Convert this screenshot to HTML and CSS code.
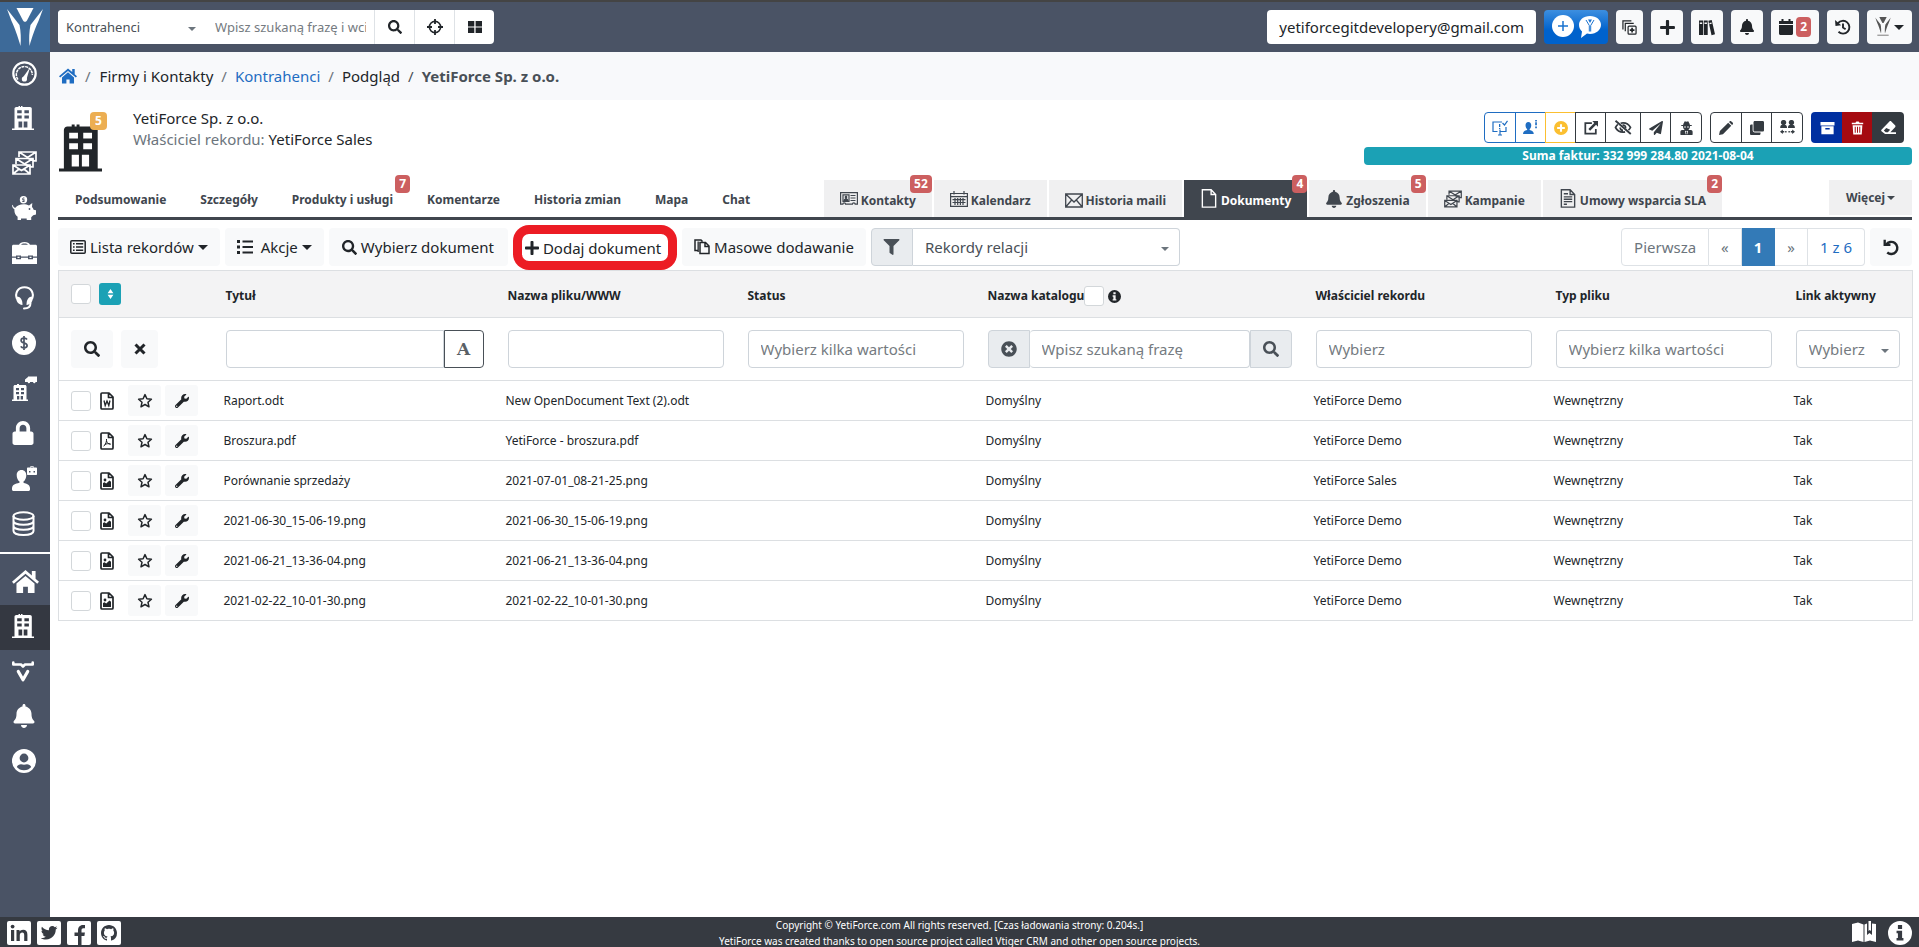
FILE: index.html
```html
<!DOCTYPE html>
<html lang="pl">
<head>
<meta charset="utf-8">
<meta name="viewport" content="width=device-width, initial-scale=1">
<title>YetiForce Sp. z o.o.</title>
<link rel="stylesheet" href="styles.css">
</head>
<body>
<svg class="sprite" aria-hidden="true">
  <symbol id="search" viewBox="0 0 512 512"><path d="M505 442.7L405.3 343c-4.5-4.5-10.6-7-17-7H372c27.6-35.3 44-79.7 44-128C416 93.1 322.9 0 208 0S0 93.1 0 208s93.1 208 208 208c48.3 0 92.7-16.4 128-44v16.3c0 6.4 2.5 12.5 7 17l99.7 99.7c9.4 9.4 24.6 9.4 33.9 0l28.3-28.3c9.4-9.4 9.4-24.6.1-34zM208 336c-70.7 0-128-57.2-128-128 0-70.7 57.2-128 128-128 70.7 0 128 57.2 128 128 0 70.7-57.2 128-128 128z"/></symbol>
  <symbol id="target" viewBox="0 0 16 16"><circle cx="8" cy="8" r="5.6" fill="none" stroke="currentColor" stroke-width="1.6"/><path d="M7.1 0h1.8v5H7.1zM7.1 11h1.8v5H7.1zM0 7.1h5v1.8H0zM11 7.1h5v1.8h-5z"/></symbol>
  <symbol id="grid" viewBox="0 0 14 12"><path d="M0 0h6.3v5.4H0zM7.6 0H14v5.4H7.6zM0 6.6h6.3V12H0zM7.6 6.6H14V12H7.6z"/></symbol>
  <symbol id="bell" viewBox="0 0 448 512"><path d="M224 512c35.32 0 63.97-28.65 63.97-64H160.03c0 35.35 28.65 64 63.97 64zm215.39-149.71c-19.32-20.76-55.47-51.99-55.47-154.29 0-77.7-54.48-139.9-127.94-155.16V32c0-17.67-14.32-32-31.98-32s-31.98 14.33-31.98 32v20.84C118.56 68.1 64.08 130.3 64.08 208c0 102.3-36.15 133.53-55.47 154.29-6 6.45-8.66 14.16-8.61 21.71.11 16.4 12.98 32 32.1 32h383.8c19.12 0 32-15.6 32.1-32 .05-7.55-2.61-15.27-8.61-21.71z"/></symbol>
  <symbol id="plus" viewBox="0 0 448 512"><path d="M416 208H272V64c0-17.67-14.33-32-32-32h-32c-17.67 0-32 14.33-32 32v144H32c-17.67 0-32 14.33-32 32v32c0 17.67 14.33 32 32 32h144v144c0 17.67 14.33 32 32 32h32c17.67 0 32-14.33 32-32V304h144c17.67 0 32-14.33 32-32v-32c0-17.67-14.33-32-32-32z"/></symbol>
  <symbol id="wrench" viewBox="0 0 512 512"><path d="M507.73 109.1c-2.24-9.03-13.54-12.09-20.12-5.51l-74.36 74.36-67.88-11.31-11.31-67.88 74.36-74.36c6.62-6.62 3.43-17.9-5.66-20.16-47.38-11.74-99.55.91-136.58 37.93-39.64 39.64-50.55 97.1-34.05 147.2L18.74 402.76c-24.99 24.99-24.99 65.51 0 90.5 24.99 24.99 65.51 24.99 90.5 0l213.21-213.21c50.12 16.71 107.47 5.68 147.37-34.22 37.07-37.07 49.7-89.32 37.91-136.73zM64 472c-13.25 0-24-10.75-24-24 0-13.26 10.75-24 24-24s24 10.74 24 24c0 13.25-10.75 24-24 24z"/></symbol>
  <symbol id="star" viewBox="0 0 16 16"><path d="M8 1.6l1.9 4.2 4.5.5-3.4 3 1 4.5L8 11.5l-4 2.3 1-4.5-3.4-3 4.5-.5z" fill="none" stroke="currentColor" stroke-width="1.5" stroke-linejoin="round"/></symbol>
  <symbol id="filter" viewBox="0 0 512 512"><path d="M487.976 0H24.028C2.71 0-8.047 25.866 7.058 40.971L192 225.941V432c0 7.831 3.821 15.17 10.237 19.662l80 55.98C298.02 518.69 320 507.493 320 487.98V225.941l184.947-184.97C520.021 25.896 509.338 0 487.976 0z"/></symbol>
  <symbol id="lock" viewBox="0 0 448 512"><path d="M400 224h-24v-72C376 68.2 307.8 0 224 0S72 68.2 72 152v72H48c-26.5 0-48 21.5-48 48v192c0 26.5 21.5 48 48 48h352c26.5 0 48-21.5 48-48V272c0-26.500-21.500-48-48-48zm-104 0H152v-72c0-39.700 32.300-72 72-72s72 32.300 72 72v72z"/></symbol>
  <symbol id="xcircle" viewBox="0 0 512 512"><path d="M256 8C119 8 8 119 8 256s111 248 248 248 248-111 248-248S393 8 256 8zm121.6 313.1c4.7 4.7 4.7 12.3 0 17L338 377.6c-4.7 4.7-12.3 4.7-17 0L256 312l-65.1 65.6c-4.7 4.7-12.3 4.7-17 0L134.4 338c-4.7-4.7-4.7-12.3 0-17l65.6-65-65.6-65.1c-4.7-4.7-4.7-12.3 0-17l39.6-39.6c4.7-4.7 12.3-4.7 17 0l65 65.7 65.1-65.6c4.7-4.7 12.3-4.7 17 0l39.6 39.6c4.7 4.7 4.7 12.3 0 17L312 256l65.6 65.1z"/></symbol>
  <symbol id="info" viewBox="0 0 16 16"><path fill-rule="evenodd" d="M8 0a8 8 0 1 0 0 16A8 8 0 0 0 8 0zM6.600 2.700h2.800v2.600H6.600zM5.700 6.500h3.700v4.800h.9v1.700H5.700v-1.700h.9V8.200h-.9z"/></symbol>
  <symbol id="x" viewBox="0 0 14 14"><path d="M2.500 2.500l9 9M11.500 2.500l-9 9" stroke="currentColor" stroke-width="3" fill="none"/></symbol>
  <symbol id="sort" viewBox="0 0 8 12"><path d="M4 0l3.500 5h-7zM4 12L.5 7h7z"/></symbol>
  <symbol id="home" viewBox="0 0 26 22"><path d="M13 0L0 11.200l1.700 2L13 3.600l11.300 9.600 1.700-2-3.300-2.900V1h-3.600v4.200z"/><path d="M13 5.600L4.300 13v9h6.400v-6h4.600v6h6.400v-9z"/></symbol>
  <symbol id="building" viewBox="0 0 22 24"><path fill-rule="evenodd" d="M6.500 1V0H8v1h1V0h1.500v1H18c1 0 1.800.8 1.800 1.800v19.700H22V24H0v-1.500h2.500V2.800C2.500 1.800 3.300 1 4.300 1zM5.200 4.200v3h4.500v-3zm7.200 0v3h4.500v-3zm-7.200 5.400v3h4.500v-3zm7.200 0v3h4.500v-3zM6.500 15.500v6h3.700v-6zm5.200 0v6h3.700v-6z"/></symbol>
  <symbol id="gauge" viewBox="0 0 25 25"><circle cx="12.500" cy="12.500" r="11.200" fill="none" stroke="currentColor" stroke-width="2.200"/><path d="M6 18.500A8 8 0 1 1 20.300 14" fill="none" stroke="currentColor" stroke-width="1.500" stroke-dasharray="3 .7"/><path d="M10.500 17L18 6.500l-3.500 11.800z"/><circle cx="12.400" cy="18" r="2.600"/></symbol>
  <symbol id="mails" viewBox="0 0 25 24"><g fill="none" stroke="currentColor" stroke-width="1.700"><path d="M7 6V1h17v9h-3M7 1l8.500 5.500L24 1M15 7l8 3"/><path d="M4 13V7.500h17V16h-3M4 7.500l8.500 5.500L21 7.500M12 13l8 3"/><path d="M1 14h17v9H1zM1 14l8.500 5.500L18 14M1 23l6-5M18 23l-6-5"/></g></symbol>
  <symbol id="piggy" viewBox="0 0 24 24"><path fill-rule="evenodd" d="M11.500 0a3.700 3.700 0 1 0 0 7.400 3.700 3.700 0 0 0 0-7.400zm-.5 1.500h1.400v1h-1.500v.8h1.600v2.600h-2.200V5h1.200v-.8h-1.200V1.900H11z"/><path d="M1 9.500c.5 2 1.200 2.300 2.400 2.200C5 9.600 8 8.300 11.500 8.300c2 0 4 .4 5.500 1.100L20.300 7l-.3 4c.8.800 1.300 1.700 1.600 2.800l2.400.5v4.200l-2.800.8-2 2V24h-4.500v-1.500H9V24H5.600v-3.300C3.500 19.200 2.400 17 2.400 14.500v-1.300C.9 12.600 0 11 0 8.800z"/><circle cx="17.500" cy="13" r=".9" fill="#4a5365"/></symbol>
  <symbol id="brief" viewBox="0 0 25 22"><path fill-rule="evenodd" d="M7 2.800C8 1 9.500 0 12.500 0S17 1 18 2.800h5.500c.8 0 1.500.6 1.500 1.400v10.300h-4v-1h-5v1H9v-1H4v1H0V4.200c0-.8.700-1.400 1.500-1.400zm2 0h7c-.7-.9-1.700-1.300-3.500-1.300S9.700 1.900 9 2.800z"/><path d="M0 15.700h4v1.500h5v-1.500h7v1.500h5v-1.500h4V22H0zM5.500 14.700h2v1.300h-2zM17.500 14.700h2v1.300h-2z"/></symbol>
  <symbol id="headset" viewBox="0 0 20 24"><path d="M2.500 13C0 7 3.500 1.200 10 1.200S20 7 17.500 13" fill="none" stroke="currentColor" stroke-width="2"/><path d="M2 10.500c4 0 6 3 6 8.500C3.500 18.500 1 15 2 10.500zM18 10.500c-4 0-6 3-6 8.500 4.500-.5 7-4 6-8.500z"/><path d="M16 17c0 4-2 5.500-6.500 5.500" fill="none" stroke="currentColor" stroke-width="2" stroke-linecap="round"/></symbol>
  <symbol id="dollar" viewBox="0 0 24 24"><circle cx="12" cy="12" r="12"/><path d="M15 8.500c-.6-1-1.600-1.300-3-1.300-1.800 0-2.900.9-2.900 2.200 0 3.200 6 1.800 6 5.200 0 1.400-1.200 2.300-3.100 2.300-1.500 0-2.600-.5-3.200-1.600M12 5v14" fill="none" stroke="#4a5365" stroke-width="1.700"/></symbol>
  <symbol id="fleet" viewBox="0 0 25 25"><path fill-rule="evenodd" d="M3 9h2V8h2v1h6c.8 0 1.500.7 1.500 1.500V23.500H16V25H0v-1.500h1.500v-13C1.500 9.700 2.200 9 3 9zm1 3v2.300h3V12zm5 0v2.300h3V12zm-5 4v2.300h3V16zm5 0v2.300h3V16zm-4 4v3.500h2.300V20zm3.700 0v3.500H11V20z"/><path d="M13 3.500L16 1v-.5h9V6h-1.500a1.200 1.200 0 0 1-2.400 0h-3a1.200 1.200 0 0 1-2.400 0H13z"/></symbol>
  <symbol id="agent" viewBox="0 0 25 25"><path d="M9.500 4C6.500 4 4.700 6.200 4.700 9s1 5.300 2.800 6.600v1.200C3 18 .5 18.500 0 22v1.500c0 .8.700 1.500 1.500 1.500h15c.8 0 1.500-.7 1.500-1.500V22c-.5-3.500-3-4-6.500-5.200v-1.200c1.800-1.300 2.800-3.800 2.800-6.600S12.500 4 9.500 4z"/><path fill-rule="evenodd" d="M15 2.500c0-.6.400-1 1-1h2.500V0h3v1.500H24c.6 0 1 .4 1 1V8c0 .6-.4 1-1 1h-8c-.6 0-1-.4-1-1zM19 .7v.8h2V.7zM17 5h1.500v1.500H17zm4.500 0H23v1.500h-1.500z"/></symbol>
  <symbol id="db" viewBox="0 0 22 25"><ellipse cx="11" cy="5" rx="10" ry="3.800" fill="none" stroke="currentColor" stroke-width="2"/><path d="M1 5v15c0 2.500 4.500 4 10 4s10-1.500 10-4V5M1 10c0 2.300 4.500 3.800 10 3.800S21 12.300 21 10M1 15c0 2.300 4.500 3.800 10 3.800S21 17.300 21 15" fill="none" stroke="currentColor" stroke-width="2"/></symbol>
  <symbol id="bull" viewBox="0 0 22 21"><path d="M1.300 1.500v2h7.700l2 2 2-2h7.700v-2" fill="none" stroke="currentColor" stroke-width="2.600" stroke-linecap="round" stroke-linejoin="round"/><path d="M6.300 10.500l4.700 8.300 4.700-8.300" fill="none" stroke="currentColor" stroke-width="3.200" stroke-linecap="round" stroke-linejoin="round"/></symbol>
  <symbol id="usercircle" viewBox="0 0 24 24"><path fill-rule="evenodd" d="M12 0a12 12 0 1 0 0 24 12 12 0 0 0 0-24zm0 4.600a4.400 4.400 0 1 1 0 8.800 4.400 4.400 0 0 1 0-8.800zm0 16.600c-3 0-5.600-1.300-7.200-3.300.8-1.600 2.400-2.600 4.200-2.600 1 .3 2 .5 3 .5s2-.2 3-.5c1.800 0 3.400 1 4.200 2.600-1.600 2-4.200 3.300-7.200 3.300z"/></symbol>
  <symbol id="copyadd" viewBox="0 0 16 16"><g fill="none" stroke="currentColor" stroke-width="1.300"><path d="M1 10V1h9M3.500 12V3.500h9"/><rect x="6.500" y="6.500" width="8.500" height="8.500" rx="1"/><path d="M10.750 8.300v5M8.300 10.750h5" stroke-width="1.800"/></g></symbol>
  <symbol id="books" viewBox="0 0 18 18"><path fill-rule="evenodd" d="M0 1h4.500v16.500H0zM.9 3.500h2.700V5H.9zM5.300 1h4.500v16.500H5.300zM6.200 3.500h2.700V5H6.200zM10.500 1.500l3.800-1L18 16.500l-3.900 1.200zM11.600 4l2.400-.6.3 1.400-2.400.6z"/></symbol>
  <symbol id="calendar" viewBox="0 0 14 16"><path d="M2.500 0h2v2h5V0h2v2H14v3H0V2h2.500zM0 6h14v8.500c0 .8-.7 1.500-1.500 1.500h-11C.7 16 0 15.300 0 14.500z"/></symbol>
  <symbol id="history" viewBox="0 0 16 16"><path d="M3 4.200A6.400 6.400 0 1 1 3.500 12.800M8 4.500V8.500l2.600 1.700" fill="none" stroke="currentColor" stroke-width="1.900"/><path d="M0 1l.5 6 5.700-.8z"/></symbol>
  <symbol id="note" viewBox="0 0 16 16"><path d="M10 2H1v9.500h4.500M14 7v4.500H8.500M8 9.500V15M6 15h4M10.500 3l2 2L15.500.8" fill="none" stroke="currentColor" stroke-width="1.200"/><path d="M7 4h1.300v3H7zM7 8h1.300v1H7z"/></symbol>
  <symbol id="useralert" viewBox="0 0 16 16"><path d="M5.700 2C3.700 2 2.700 3.500 2.700 5.500c0 1.800.7 3.500 1.700 4.200v1C2 11.300.2 12 0 15h11.500c-.2-3-2-3.700-4.400-4.300v-1c1-.7 1.700-2.400 1.700-4.200C8.800 3.500 7.700 2 5.700 2zM13 0h1.800v1.500H13zM13 2.500h1.800v3H13zM13 7h1.800v1.800H13z"/></symbol>
  <symbol id="pluscircle" viewBox="0 0 16 16"><path fill-rule="evenodd" d="M8 0a8 8 0 1 0 0 16A8 8 0 0 0 8 0zM6.800 3.600h2.400v3.200h3.200v2.400H9.200v3.200H6.800V9.200H3.600V6.800h3.200z"/></symbol>
  <symbol id="external" viewBox="0 0 16 16"><path d="M9 2.500H1.500v12h12V9" fill="none" stroke="currentColor" stroke-width="2"/><path d="M9.500 0H16v6.500l-2.200-2.200L7 11.100 5 9l6.700-6.800z"/></symbol>
  <symbol id="eyeslash" viewBox="0 0 18 16"><path d="M3.500 4.700C2.300 5.700 1.500 7 1 8c1.500 3 4.500 5 8 5 .8 0 1.500-.1 2.200-.3M6.500 3.400C7.300 3.100 8.200 3 9 3c3.500 0 6.500 2 8 5-.4.900-1.100 1.900-2.200 2.800M8.500 5.500c2-.3 3.800 1.200 3.200 3.300M6 8c0 1.800 1.300 3 3 3" fill="none" stroke="currentColor" stroke-width="1.800"/><path d="M1 .8L17.300 15" stroke="currentColor" stroke-width="2"/></symbol>
  <symbol id="plane" viewBox="0 0 512 512"><path d="M476 3.200L12.500 270.600c-18.100 10.400-15.800 35.600 2.200 43.200L121 358.400l287.300-253.200c5.500-4.900 13.300 2.600 8.600 8.300L176 407v80.500c0 23.600 28.500 32.900 42.500 15.800L282 426l124.600 52.200c14.200 6 30.400-2.900 33-18.200l72-432C515 7.800 493.300-6.800 476 3.200z"/></symbol>
  <symbol id="spy" viewBox="0 0 14 16"><path fill-rule="evenodd" d="M3.500 3L5 .3l2 .6 2-.6L10.500 3l.4 1.500H13v1.300h-2c0 2-.7 3.300-1.500 4l-.3.600h3c1 0 1.500.8 1.800 2V15c0 .6-.4 1-1 1H1c-.6 0-1-.4-1-1v-2.600c.3-1.200.8-2 1.800-2h3l-.3-.6C3.700 9.100 3 7.800 3 5.800H1V4.500h2.100zM4.300 6.300v1.200h2V6.300zm3.400 0v1.200h2V6.300zM5.300 11l.7 4h.7l-.3-2.500.6-.7.600.7-.3 2.500H8l.7-4-1.700.6z"/></symbol>
  <symbol id="pencil" viewBox="0 0 16 16"><path d="M0 16l1-4.500L10.500 2 14 5.500 4.500 15zM11.400 1.100l.6-.6c.7-.7 1.600-.7 2.200 0l1.300 1.300c.7.700.7 1.500 0 2.200l-.6.600z"/></symbol>
  <symbol id="clone" viewBox="0 0 512 512"><path d="M464 0c26.510 0 48 21.490 48 48v288c0 26.510-21.490 48-48 48H176c-26.510 0-48-21.490-48-48V48c0-26.510 21.490-48 48-48h288M176 416c-44.112 0-80-35.888-80-80V128H48c-26.510 0-48 21.490-48 48v288c0 26.510 21.490 48 48 48h288c26.510 0 48-21.490 48-48v-48H176z"/></symbol>
  <symbol id="transfer" viewBox="0 0 16 16"><path d="M3.800 0a2.600 2.600 0 0 1 1.200 5c1.500.3 2.500 1 2.500 3.500H.2C.2 6 1 5.300 2.600 5a2.600 2.600 0 0 1 1.200-5zM12.200 0a2.600 2.600 0 0 1 1.200 5c1.500.3 2.500 1 2.500 3.500H8.500c0-2.500 1-3.200 2.500-3.500a2.600 2.600 0 0 1 1.200-5zM0 12.500L3 10v1.800h1.500v1.400H3V15zM16 12.500L13 10v1.800h-1.500v1.400H13V15zM5.500 11.800H7v1.400H5.500zM9 11.800h1.500v1.400H9z"/></symbol>
  <symbol id="archive" viewBox="0 0 16 16"><path fill-rule="evenodd" d="M0 1h16v4H0zM1 6h14v9H1zM5.500 8v1.600h5V8z"/></symbol>
  <symbol id="trash" viewBox="0 0 16 16"><path fill-rule="evenodd" d="M1 1.500h4.500L6.500 0h3l1 1.500H15v2H1zM2 4.500h12l-.8 11.500H2.800zM4.600 6.500v7.300h1.200V6.500zm2.800 0v7.300h1.200V6.500zm2.800 0v7.300h1.200V6.500z"/></symbol>
  <symbol id="eraser" viewBox="0 0 16 16"><path fill-rule="evenodd" d="M.5 10.500L9 1.500c.6-.6 1.400-.6 2 0l4 4.200c.6.600.6 1.400 0 2L10 13h6v2H4.300L.5 12c-.5-.5-.5-1 0-1.500zM5.600 8.500L3 11.300 5 13h2.300l2.500-2.500z"/></symbol>
  <symbol id="list" viewBox="0 0 16 14"><rect x=".8" y=".8" width="14.400" height="12.400" rx="1" fill="none" stroke="currentColor" stroke-width="1.500"/><path d="M3 3h1.600v1.600H3zM3 6.200h1.600v1.600H3zM3 9.400h1.600V11H3zM6 3h7.200v1.500H6zM6 6.200h7.200v1.500H6zM6 9.400h7.200v1.500H6z"/></symbol>
  <symbol id="bullets" viewBox="0 0 16 14"><path d="M0 0h3v3H0zM0 5.500h3v3H0zM0 11h3v3H0zM5.500.5H16v2H5.500zM5.500 6H16v2H5.500zM5.500 11.500H16v2H5.500z"/></symbol>
  <symbol id="papers" viewBox="0 0 16 16"><path d="M4 11.500H1V1h6l1.500 1.500M6 14.500V3.500h5.500L15 7v7.500zM11 3.800V7.500h3.800" fill="none" stroke="currentColor" stroke-width="1.500"/><path d="M3.500 13V2.500h1.300V13z"/></symbol>
  <symbol id="undo" viewBox="0 0 16 16"><path d="M3 5.300A5.700 5.700 0 1 1 4 12.700" fill="none" stroke="currentColor" stroke-width="2.300"/><path d="M.5.800h2.200v3.700H7v2.200H.5z"/></symbol>
  <symbol id="vcard" viewBox="0 0 18 14"><path fill="none" stroke="currentColor" stroke-width="1.200" d="M.6.600h16.800v11.600h-2.200a1.400 1.400 0 0 0-2.800 0H5.600a1.400 1.400 0 0 0-2.800 0H.6zM10.500 3.500h5M10.500 6h5M10.500 8.500h5M3 2.800h6v6.500H3z"/><path d="M6 3.500c1.600 0 1.600 2.500.7 3 1 .3 1.800.8 1.800 2.500h-5c0-1.700.8-2.200 1.800-2.500-.9-.5-.9-3 .7-3z"/></symbol>
  <symbol id="cal2" viewBox="0 0 18 16"><path fill="none" stroke="currentColor" stroke-width="1.200" d="M.6 2.500h16.800v12.900H.6zM.6 5.600h16.800M4 0v3.500M14 0v3.500M2.500 8.700h13M2.500 11.500h13M5 7v7M7.700 7v7M10.400 7v7M13 7v7"/></symbol>
  <symbol id="mail" viewBox="0 0 18 15"><path fill="none" stroke="currentColor" stroke-width="1.300" d="M.7 1h16.600v13H.7zM.7 1L9 9l8.300-8M.7 14l6-7M17.300 14l-6-7"/></symbol>
  <symbol id="page" viewBox="0 0 14 18"><path fill="none" stroke="currentColor" stroke-width="1.300" d="M.7.700h8.300l4.300 4.500v12H.7zM9 .7v4.500h4.300"/></symbol>
  <symbol id="contract" viewBox="0 0 14 18"><path fill="none" stroke="currentColor" stroke-width="1.300" d="M.7.700h8.300l4.300 4.500v12H.7zM9 .7v4.500h4.300M3 4.500h4M3 7.500h8M3 9.700h8M3 12h8M3 14.500h3"/></symbol>
  <symbol id="fileword" viewBox="0 0 14 18"><path fill="none" stroke="currentColor" stroke-width="1.700" stroke-linejoin="round" d="M1 2c0-.6.400-1 1-1h7l4 4v11c0 .6-.4 1-1 1H2c-.6 0-1-.4-1-1zM8.500 1v4.500H13"/><path fill="none" stroke="currentColor" stroke-width="1.300" d="M4 8.500l1.200 5L7 9l1.800 4.500 1.200-5"/></symbol>
  <symbol id="filepdf" viewBox="0 0 14 18"><path fill="none" stroke="currentColor" stroke-width="1.700" stroke-linejoin="round" d="M1 2c0-.6.400-1 1-1h7l4 4v11c0 .6-.4 1-1 1H2c-.6 0-1-.4-1-1zM8.500 1v4.500H13"/><path fill="none" stroke="currentColor" d="M6.500 7c.3 2.500-.8 5.200-2.800 7.300M6.500 9c.7 2 2 3.200 4.300 3.200M4.700 12.500c2-.9 3.500-1 5.500-.6"/></symbol>
  <symbol id="fileimg" viewBox="0 0 14 18"><path fill="none" stroke="currentColor" stroke-width="1.700" stroke-linejoin="round" d="M1 2c0-.6.400-1 1-1h7l4 4v11c0 .6-.4 1-1 1H2c-.6 0-1-.4-1-1zM8.500 1v4.500H13"/><path d="M3 11l1.500-.8 1.700 1.300L9.500 8.500 11 9.800V15H3z"/><circle cx="5" cy="8" r="1.400"/></symbol>
  <symbol id="yeti" viewBox="0 0 36 38"><path d="M9.500 0h17L20 12.500c-1 1.800-3 1.800-4 0z"/><path d="M0 1l12.500 16c1.300 6 1.700 14 1 21C11 29 7.500 19 4.500 13zM36 1L23.500 17c-1.300 6-1.700 14-1 21C25 29 28.500 19 31.500 13z"/></symbol>
  <symbol id="linkedin" viewBox="0 0 24 24"><rect width="24" height="24" rx="2"/><path fill="#363a41" d="M4 9h3.200v11H4zM9.500 9h3v1.600c.8-1.200 2-1.900 3.600-1.900 2.900 0 4.300 1.700 4.300 5V20h-3.200v-5.800c0-1.700-.5-2.700-1.900-2.700-1.600 0-2.500 1.100-2.500 2.900V20H9.500z"/><circle cx="5.600" cy="5.600" r="1.900" fill="#363a41"/></symbol>
  <symbol id="twitter" viewBox="0 0 24 24"><rect width="24" height="24" rx="2"/><path fill="#363a41" transform="translate(3.800 3.500) scale(.0325)" d="M459.370 151.716c.325 4.548.325 9.097.325 13.645 0 138.720-105.583 298.558-298.558 298.558-59.452 0-114.680-17.219-161.137-47.106 8.447.974 16.568 1.299 25.340 1.299 49.055 0 94.213-16.568 130.274-44.832-46.132-.975-84.792-31.188-98.112-72.772 6.498.974 12.995 1.624 19.818 1.624 9.421 0 18.843-1.300 27.614-3.573-48.081-9.747-84.143-51.980-84.143-102.985v-1.299c13.969 7.797 30.214 12.670 47.431 13.319-28.264-18.843-46.781-51.005-46.781-87.391 0-19.492 5.197-37.360 14.294-52.954 51.655 63.675 129.300 105.258 216.365 109.807-1.624-7.797-2.599-15.918-2.599-24.040 0-57.828 46.782-104.934 104.934-104.934 30.213 0 57.502 12.670 76.670 33.137 23.715-4.548 46.456-13.320 66.599-25.340-7.798 24.366-24.366 44.833-46.132 57.827 21.117-2.273 41.584-8.122 60.426-16.243-14.292 20.791-32.161 39.308-52.628 54.253z"/></symbol>
  <symbol id="facebook" viewBox="0 0 24 24"><rect width="24" height="24" rx="2"/><path fill="#363a41" d="M11 24v-9H7.500v-3.400H11V9.500C11 6.300 12.800 4 16 4h2v3.300h-1.600c-1.300 0-1.900.8-1.900 2v2.300h3.400l-.5 3.400h-2.900v9z"/></symbol>
  <symbol id="github" viewBox="0 0 24 24"><rect width="24" height="24" rx="2"/><path fill="#363a41" transform="translate(4 4)" d="M8 0C3.580 0 0 3.580 0 8c0 3.540 2.290 6.530 5.470 7.590.4.070.55-.170.55-.380 0-.190-.010-.820-.010-1.490-2.010.370-2.530-.490-2.690-.940-.090-.230-.480-.940-.820-1.130-.280-.150-.680-.520-.010-.530.630-.010 1.080.580 1.230.820.720 1.210 1.870.870 2.330.660.070-.520.280-.870.510-1.070-1.780-.200-3.640-.890-3.640-3.950 0-.870.310-1.590.820-2.150-.080-.200-.360-1.020.080-2.120 0 0 .670-.210 2.200.820.640-.180 1.320-.270 2-.270s1.360.090 2 .270c1.530-1.040 2.200-.820 2.200-.820.440 1.100.160 1.920.080 2.120.510.560.820 1.270.820 2.150 0 3.070-1.870 3.750-3.650 3.950.290.250.540.730.540 1.480 0 1.070-.010 1.930-.010 2.200 0 .210.150.460.55.380A8.010 8.010 0 0 0 16 8c0-4.420-3.580-8-8-8z"/></symbol>
  <symbol id="manual" viewBox="0 0 24 22"><path d="M0 3l6-1.500 5.500 2V21L6 19.500 0 21z"/><path d="M12.500 3.500L15 2.600V14l2.500-2 2.500 2V2.500l4 .5v18l-6-1.500-5.500 1.500z"/><path d="M16.500 0h2.500v10l-1.300-1-1.200 1z"/></symbol>
</svg>

<div class="app">
  <header class="topbar">
    <a class="brand" href="#" aria-label="YetiForce"><svg width="36" height="38"><use href="#yeti"/></svg></a>
    <form class="search">
      <div class="pick search-pick"><select aria-label="Moduł"><option>Kontrahenci</option></select></div>
      <input class="search-text" type="text" aria-label="Szukaj" placeholder="Wpisz szukaną frazę i wciśnij enter">
      <button type="button" aria-label="Szukaj"><svg width="14" height="14"><use href="#search"/></svg></button>
      <button type="button" aria-label="Cel"><svg width="16" height="16"><use href="#target"/></svg></button>
      <button type="button" aria-label="Zaawansowane"><svg width="14" height="12"><use href="#grid"/></svg></button>
    </form>
    <div class="tools">
      <a class="email" href="#">yetiforcegitdevelopery@gmail.com</a>
      <button class="tool chat" type="button" aria-label="Czat"><svg width="52" height="26" viewBox="0 0 52 26"><circle cx="13" cy="12" r="11" fill="#fff"/><path d="M13 7v10M8 12h10" stroke="#1a73d0" stroke-width="1.500"/><path d="M40 2c6.500 0 11 4 11 8.800S46.500 20 40 20c-1 0-2-.1-3-.4L31 24l1-6.500c-2-1.600-3-4-3-6.700C29 6 33.500 2 40 2z" fill="#fff"/><path d="M36 6l3.300 5.500v6M44 6l-3.300 5.500v6" fill="none" stroke="#1a73d0"/><path d="M38 5.500h4L40 9z" fill="#1a73d0"/></svg></button>
      <button class="tool slim" type="button" aria-label="Kopiuj"><svg width="15" height="15"><use href="#copyadd"/></svg></button>
      <button class="tool" type="button" aria-label="Dodaj"><svg width="15" height="17"><use href="#plus"/></svg></button>
      <button class="tool" type="button" aria-label="Biblioteka"><svg width="16" height="17"><use href="#books"/></svg></button>
      <button class="tool" type="button" aria-label="Powiadomienia"><svg width="14" height="16"><use href="#bell"/></svg></button>
      <button class="tool" type="button" aria-label="Kalendarz"><svg width="14" height="16"><use href="#calendar"/></svg><span class="badge">2</span></button>
      <button class="tool" type="button" aria-label="Historia"><svg width="16" height="16"><use href="#history"/></svg></button>
      <button class="tool" type="button" aria-label="Konto"><svg class="avatar" width="16" height="20" viewBox="0 0 36 46"><use href="#yeti" width="36" height="38"/><path d="M5 42h26" stroke="#999" stroke-width="3"/></svg><i class="caret"></i></button>
    </div>
  </header>

  <div class="body">
    <nav class="side" aria-label="Menu">
      <a href="#" aria-label="Pulpit"><svg width="25" height="25"><use href="#gauge"/></svg></a>
      <a href="#" aria-label="Firmy"><svg width="22" height="24"><use href="#building"/></svg></a>
      <a href="#" aria-label="Marketing"><svg width="25" height="24"><use href="#mails"/></svg></a>
      <a href="#" aria-label="Sprzedaż"><svg width="24" height="24"><use href="#piggy"/></svg></a>
      <a href="#" aria-label="Realizacja"><svg width="25" height="22"><use href="#brief"/></svg></a>
      <a href="#" aria-label="Wsparcie"><svg width="25" height="24"><use href="#headset"/></svg></a>
      <a href="#" aria-label="Księgowość"><svg width="24" height="24"><use href="#dollar"/></svg></a>
      <a href="#" aria-label="Logistyka"><svg width="25" height="25"><use href="#fleet"/></svg></a>
      <a href="#" aria-label="Sekretariat"><svg width="22" height="24"><use href="#lock"/></svg></a>
      <a href="#" aria-label="Kadry"><svg width="25" height="25"><use href="#agent"/></svg></a>
      <a href="#" aria-label="Bazy"><svg width="23" height="25"><use href="#db"/></svg></a>
      <hr>
      <a href="#" aria-label="Start"><svg width="27" height="23"><use href="#home"/></svg></a>
      <a class="on" href="#" aria-label="Kontrahenci"><svg width="22" height="24"><use href="#building"/></svg></a>
      <a href="#" aria-label="Vtiger"><svg width="22" height="21"><use href="#bull"/></svg></a>
      <a href="#" aria-label="Powiadomienia"><svg width="24" height="24"><use href="#bell"/></svg></a>
      <a href="#" aria-label="Użytkownik"><svg width="24" height="24"><use href="#usercircle"/></svg></a>
    </nav>

    <main class="main">
      <nav class="crumbs" aria-label="Ścieżka">
        <a href="#" aria-label="Start"><svg width="18" height="16"><use href="#home"/></svg></a><i>/</i>
        <span>Firmy i Kontakty</span><i>/</i><a href="#">Kontrahenci</a><i>/</i><span>Podgląd</span><i class="b">/</i><b>YetiForce Sp. z o.o.</b>
      </nav>

      <div class="content">
        <section class="record">
          <div class="record-icon"><svg width="43" height="48"><use href="#building"/></svg><span class="badge amber">5</span></div>
          <div class="record-text"><h1>YetiForce Sp. z o.o.</h1><p>Właściciel rekordu: <a href="#">YetiForce Sales</a></p></div>
          <div class="record-side">
            <div class="actions">
              <div class="group">
                <button class="blue" type="button" aria-label="Notatka"><svg width="16" height="16"><use href="#note"/></svg></button>
                <button class="blue" type="button" aria-label="Osoba"><svg width="15" height="15"><use href="#useralert"/></svg></button>
                <button class="yellow" type="button" aria-label="Dodaj"><svg width="14" height="14"><use href="#pluscircle"/></svg></button>
                <button type="button" aria-label="Otwórz"><svg width="14" height="14"><use href="#external"/></svg></button>
                <button class="wide" type="button" aria-label="Ukryj"><svg width="18" height="15"><use href="#eyeslash"/></svg></button>
                <button type="button" aria-label="Wyślij"><svg width="14" height="14"><use href="#plane"/></svg></button>
                <button type="button" aria-label="Prywatność"><svg width="13" height="14"><use href="#spy"/></svg></button>
              </div>
              <div class="group">
                <button type="button" aria-label="Edytuj"><svg width="14" height="14"><use href="#pencil"/></svg></button>
                <button type="button" aria-label="Duplikuj"><svg width="14" height="14"><use href="#clone"/></svg></button>
                <button type="button" aria-label="Przenieś"><svg width="15" height="15"><use href="#transfer"/></svg></button>
              </div>
              <div class="group solid">
                <button class="navy" type="button" aria-label="Archiwizuj"><svg width="15" height="14"><use href="#archive"/></svg></button>
                <button class="red" type="button" aria-label="Usuń"><svg width="13" height="14"><use href="#trash"/></svg></button>
                <button class="dark" type="button" aria-label="Wyczyść"><svg width="15" height="15"><use href="#eraser"/></svg></button>
              </div>
            </div>
            <div class="total">Suma faktur: 332 999 284.80 2021-08-04</div>
          </div>
        </section>

        <nav class="tabs" aria-label="Zakładki">
          <a href="#">Podsumowanie</a><a href="#">Szczegóły</a><a href="#">Produkty i usługi<span class="badge">7</span></a><a href="#">Komentarze</a><a href="#">Historia zmian</a><a href="#">Mapa</a><a href="#">Chat</a>
          <div class="related">
            <a href="#"><svg class="tall" width="18" height="14"><use href="#vcard"/></svg>Kontakty<span class="badge">52</span></a>
            <a href="#"><svg class="tall" width="18" height="16"><use href="#cal2"/></svg>Kalendarz</a>
            <a href="#"><svg width="18" height="15"><use href="#mail"/></svg>Historia maili</a>
            <a class="on" href="#"><svg class="tall" width="18" height="19"><use href="#page"/></svg>Dokumenty<span class="badge">4</span></a>
            <a href="#"><svg class="tall" width="18" height="18"><use href="#bell"/></svg>Zgłoszenia<span class="badge">5</span></a>
            <a href="#"><svg class="tall" width="18" height="18"><use href="#mails"/></svg>Kampanie</a>
            <a href="#"><svg class="tall" width="18" height="19"><use href="#contract"/></svg>Umowy wsparcia SLA<span class="badge">2</span></a>
          </div>
          <button class="more" type="button">Więcej<i class="caret"></i></button>
        </nav>

        <div class="toolbar">
          <button class="btn" type="button"><svg width="16" height="14"><use href="#list"/></svg>Lista rekordów<i class="caret"></i></button>
          <button class="btn" type="button"><svg width="16" height="14"><use href="#bullets"/></svg>&nbsp;Akcje<i class="caret"></i></button>
          <button class="btn" type="button"><svg width="15" height="15"><use href="#search"/></svg>Wybierz dokument</button>
          <button class="btn marked" type="button"><svg width="14" height="16"><use href="#plus"/></svg>Dodaj dokument</button>
          <button class="btn" type="button"><svg width="16" height="16"><use href="#papers"/></svg>Masowe dodawanie</button>
          <div class="combo relation"><span class="addon"><svg width="17" height="16"><use href="#filter"/></svg></span><div class="pick"><select aria-label="Filtr"><option>Rekordy relacji</option></select></div></div>
          <div class="pager">
            <button type="button">Pierwsza</button><button type="button">«</button><button class="on" type="button">1</button><button type="button">»</button><button class="link" type="button">1 z 6</button>
          </div>
          <button class="btn icon" type="button" aria-label="Odśwież"><svg width="17" height="17"><use href="#undo"/></svg></button>
        </div>

        <table class="grid">
          <colgroup><col class="c-tools"><col class="c-title"><col class="c-std"><col class="c-std"><col class="c-folder"><col class="c-std"><col class="c-std"><col class="c-link"></colgroup>
          <thead>
            <tr class="head">
              <th><div class="cell"><input type="checkbox" aria-label="Zaznacz wszystko"><button class="sort" type="button" aria-label="Sortuj"><svg width="7" height="10"><use href="#sort"/></svg></button></div></th>
              <th>Tytuł</th><th>Nazwa pliku/WWW</th><th>Status</th>
              <th><div class="cell tight"><label for="sub">Nazwa katalogu</label><input id="sub" type="checkbox"><svg width="13" height="13"><use href="#info"/></svg></div></th>
              <th>Właściciel rekordu</th><th>Typ pliku</th><th>Link aktywny</th>
            </tr>
            <tr class="filters">
              <td><div class="cell"><button class="btn icon" type="button" aria-label="Szukaj"><svg width="16" height="16"><use href="#search"/></svg></button><button class="btn clear" type="button" aria-label="Wyczyść"><svg width="14" height="14"><use href="#x"/></svg></button></div></td>
              <td><div class="combo"><input type="text" aria-label="Tytuł"><button class="case" type="button">A</button></div></td>
              <td><input class="field" type="text" aria-label="Nazwa pliku"></td>
              <td><input class="field" type="text" aria-label="Status" placeholder="Wybierz kilka wartości"></td>
              <td><div class="combo"><button class="addon" type="button" aria-label="Wyczyść"><svg width="16" height="16"><use href="#xcircle"/></svg></button><input type="text" aria-label="Nazwa katalogu" placeholder="Wpisz szukaną frazę"><button class="addon" type="button" aria-label="Szukaj"><svg width="16" height="16"><use href="#search"/></svg></button></div></td>
              <td><input class="field" type="text" aria-label="Właściciel rekordu" placeholder="Wybierz"></td>
              <td><input class="field" type="text" aria-label="Typ pliku" placeholder="Wybierz kilka wartości"></td>
              <td><div class="pick boxed"><select aria-label="Link aktywny"><option>Wybierz</option></select></div></td>
            </tr>
          </thead>
          <tbody>
            <tr><td><div class="cell"><input type="checkbox" aria-label="Raport.odt"><svg width="14" height="18"><use href="#fileword"/></svg><button class="mini" type="button" aria-label="Ulubione"><svg width="16" height="16"><use href="#star"/></svg></button><button class="mini" type="button" aria-label="Narzędzia"><svg width="14" height="14"><use href="#wrench"/></svg></button></div></td><td>Raport.odt</td><td>New OpenDocument Text (2).odt</td><td></td><td>Domyślny</td><td>YetiForce Demo</td><td>Wewnętrzny</td><td>Tak</td></tr>
            <tr><td><div class="cell"><input type="checkbox" aria-label="Broszura.pdf"><svg width="14" height="18"><use href="#filepdf"/></svg><button class="mini" type="button" aria-label="Ulubione"><svg width="16" height="16"><use href="#star"/></svg></button><button class="mini" type="button" aria-label="Narzędzia"><svg width="14" height="14"><use href="#wrench"/></svg></button></div></td><td>Broszura.pdf</td><td>YetiForce - broszura.pdf</td><td></td><td>Domyślny</td><td>YetiForce Demo</td><td>Wewnętrzny</td><td>Tak</td></tr>
            <tr><td><div class="cell"><input type="checkbox" aria-label="Porównanie sprzedaży"><svg width="14" height="18"><use href="#fileimg"/></svg><button class="mini" type="button" aria-label="Ulubione"><svg width="16" height="16"><use href="#star"/></svg></button><button class="mini" type="button" aria-label="Narzędzia"><svg width="14" height="14"><use href="#wrench"/></svg></button></div></td><td>Porównanie sprzedaży</td><td>2021-07-01_08-21-25.png</td><td></td><td>Domyślny</td><td>YetiForce Sales</td><td>Wewnętrzny</td><td>Tak</td></tr>
            <tr><td><div class="cell"><input type="checkbox" aria-label="2021-06-30_15-06-19.png"><svg width="14" height="18"><use href="#fileimg"/></svg><button class="mini" type="button" aria-label="Ulubione"><svg width="16" height="16"><use href="#star"/></svg></button><button class="mini" type="button" aria-label="Narzędzia"><svg width="14" height="14"><use href="#wrench"/></svg></button></div></td><td>2021-06-30_15-06-19.png</td><td>2021-06-30_15-06-19.png</td><td></td><td>Domyślny</td><td>YetiForce Demo</td><td>Wewnętrzny</td><td>Tak</td></tr>
            <tr><td><div class="cell"><input type="checkbox" aria-label="2021-06-21_13-36-04.png"><svg width="14" height="18"><use href="#fileimg"/></svg><button class="mini" type="button" aria-label="Ulubione"><svg width="16" height="16"><use href="#star"/></svg></button><button class="mini" type="button" aria-label="Narzędzia"><svg width="14" height="14"><use href="#wrench"/></svg></button></div></td><td>2021-06-21_13-36-04.png</td><td>2021-06-21_13-36-04.png</td><td></td><td>Domyślny</td><td>YetiForce Demo</td><td>Wewnętrzny</td><td>Tak</td></tr>
            <tr><td><div class="cell"><input type="checkbox" aria-label="2021-02-22_10-01-30.png"><svg width="14" height="18"><use href="#fileimg"/></svg><button class="mini" type="button" aria-label="Ulubione"><svg width="16" height="16"><use href="#star"/></svg></button><button class="mini" type="button" aria-label="Narzędzia"><svg width="14" height="14"><use href="#wrench"/></svg></button></div></td><td>2021-02-22_10-01-30.png</td><td>2021-02-22_10-01-30.png</td><td></td><td>Domyślny</td><td>YetiForce Demo</td><td>Wewnętrzny</td><td>Tak</td></tr>
          </tbody>
        </table>
      </div>
    </main>
  </div>

  <footer class="footer">
    <div class="social">
      <a href="#" aria-label="LinkedIn"><svg width="24" height="24"><use href="#linkedin"/></svg></a>
      <a href="#" aria-label="Twitter"><svg width="24" height="24"><use href="#twitter"/></svg></a>
      <a href="#" aria-label="Facebook"><svg width="24" height="24"><use href="#facebook"/></svg></a>
      <a href="#" aria-label="GitHub"><svg width="24" height="24"><use href="#github"/></svg></a>
    </div>
    <p>Copyright © YetiForce.com All rights reserved. [Czas ładowania strony: 0.204s.]<br>YetiForce was created thanks to open source project called Vtiger CRM and other open source projects.</p>
    <div class="help">
      <a href="#" aria-label="Dokumentacja"><svg width="24" height="22"><use href="#manual"/></svg></a>
      <a href="#" aria-label="Informacje"><svg width="24" height="24"><use href="#info"/></svg></a>
    </div>
  </footer>
</div>
</body>
</html>
```
FILE: styles.css
```css
* { box-sizing: border-box; }
body {
  margin: 0;
  font: 15px/20px "Noto Sans", "Open Sans", sans-serif;
  color: #212529;
  background: #fff;
}
a { color: inherit; text-decoration: none; }
h1, p { margin: 0; font-weight: 400; font-size: inherit; }
i { font-style: normal; }
svg { fill: currentColor; flex: none; display: block; }
button, input, select { font: inherit; color: inherit; margin: 0; }
button {
  border: 0;
  padding: 0;
  background: none;
  display: flex;
  align-items: center;
  justify-content: center;
}
.sprite { position: absolute; width: 0; height: 0; }
.app { min-height: 100vh; display: flex; flex-direction: column; }
.caret {
  border: 5px solid transparent;
  border-top-color: currentColor;
  border-bottom: 0;
}
.badge {
  background: #cc5f60;
  color: #fff;
  font-weight: 700;
  font-size: 12px;
  line-height: 18px;
  border-radius: 4px;
  padding: 0 4px;
}
.badge.amber { background: #ecae52; padding: 0 5px; }

/* form parts */
input[type="text"], select {
  appearance: none;
  border: 1px solid #ced4da;
  border-radius: 4px;
  background: #fff;
  height: 38px;
  width: 100%;
  min-width: 0;
  padding: 0 12px;
  color: #495057;
  outline: 0;
}
input::placeholder { color: #757b81; opacity: 1; }
input[type="checkbox"] {
  appearance: none;
  flex: none;
  width: 20px;
  height: 20px;
  border: 1px solid #d3d7da;
  border-radius: 3px;
  background: #fff;
}
.pick { position: relative; flex: 1; min-width: 0; }
.pick::after {
  content: "";
  position: absolute;
  right: 11px;
  top: 50%;
  border: 4px solid transparent;
  border-top-color: #6c757d;
  border-bottom: 0;
}
.boxed select { color: #757b81; }
.combo { display: flex; }
.combo > * { border-radius: 0; }
.combo > :first-child { border-radius: 4px 0 0 4px; }
.combo > :last-child, .combo > :last-child select { border-radius: 0 4px 4px 0; }
.addon {
  flex: 0 0 42px;
  height: 38px;
  display: flex;
  align-items: center;
  justify-content: center;
  background: #e9ecef;
  border: 1px solid #ced4da;
  color: #495057;
}
.combo .addon + * , .combo .addon + .pick select { border-left: 0; }

/* top bar */
.topbar {
  height: 52px;
  display: flex;
  align-items: center;
  background: #4a5365;
  border-top: 2px solid #444;
  padding-right: 7px;
}
.brand {
  width: 50px;
  align-self: stretch;
  background: #3d6a99;
  color: #fff;
  display: flex;
  align-items: center;
  justify-content: center;
}
.search { display: flex; width: 436px; height: 34px; margin-left: 8px; background: #fff; border-radius: 4px; overflow: hidden; font-size: 13px; }
.search-pick { flex: 0 0 149px; }
.search input[type="text"], .search select { height: 34px; border: 0; border-radius: 0; padding: 0 8px; }
.search .search-text { width: 167px; border-left: 1px solid #ced4da; }
.search button { flex: 1; border-left: 1px solid #dee2e6; }
.tools { display: flex; gap: 8px; margin-left: auto; }
.email, .tool {
  height: 34px;
  border-radius: 4px;
  background: #f8f9fa;
  display: flex;
  align-items: center;
  justify-content: center;
}
.email { background: #fff; padding: 0 12px; }
.tool { min-width: 32px; padding: 0 8px; gap: 3px; }
.tool.slim { min-width: 27px; padding: 0 6px; }
.tool.chat { padding: 0 6px; background: linear-gradient(#3d8fe0, #0062cc 60%); }
.tool .badge { line-height: 20px; }
.avatar { color: #555; }

/* side menu */
.body { flex: 1; display: flex; }
.side { width: 50px; flex: none; background: #4a5365; color: #fff; }
.side a { height: 45px; display: flex; align-items: center; padding: 0 0 3px 12px; }
.side hr { margin: 5px 0 6px; border: 0; border-top: 2px solid #fff; }
.side .on { background: #343841; }

.main { flex: 1; min-width: 0; }
.crumbs {
  height: 48px;
  display: flex;
  align-items: center;
  padding-left: 9px;
  background: #f8f9fb;
}
.crumbs a { color: #1f6dc2; }
.crumbs i { color: #6c757d; padding: 0 8px; }
.crumbs i:first-of-type { padding-right: 9px; }
.crumbs .b, .crumbs b { color: #495057; }
.content { padding: 0 7px 0 8px; }

/* record heading */
.record { display: flex; height: 80px; padding-top: 8px; }
.record-icon { width: 75px; padding: 16px 0 0 1px; position: relative; }
.record-icon .badge { position: absolute; left: 32px; top: 4px; }
.record-side { flex: 0 0 548px; margin-left: auto; padding-top: 4px; }
.record-text { line-height: 21px; }
.record-text p { color: #6c757d; }
.record-text p a { color: #212529; }
.actions { display: flex; justify-content: flex-end; gap: 8px; padding-right: 8px; margin-bottom: 4px; }
.group { display: flex; }
.group button { width: 31px; height: 31px; border: 1px solid #343a40; color: #343a40; }
.group button + button { margin-left: -1px; }
.group button:first-child { border-radius: 4px 0 0 4px; width: 32px; }
.group button:last-child { border-radius: 0 4px 4px 0; width: 32px; }
.group .wide { width: 36px; }
.group .blue { color: #1f6dc2; border-color: #1f6dc2; }
.group .yellow { color: #fbbf30; border-color: #fbbf30; }
.group .navy { background: #002fa0; }
.group .red { background: #a50a10; }
.group .dark { background: #343a40; }
.group.solid button { border: 0; color: #fff; }
.total {
  background: #1ba1b5;
  color: #fff;
  font-size: 12px;
  font-weight: 700;
  line-height: 18px;
  text-align: center;
  border-radius: 4px;
}

/* tabs */
.tabs { display: flex; height: 40px; border-bottom: 3px solid #40464e; font-size: 12px; font-weight: 700; color: #40464e; }
.tabs a { display: flex; align-items: center; padding: 2px 17px 0; position: relative; white-space: nowrap; }
.tabs .badge { position: absolute; right: 0; top: -5px; }
.related { display: flex; gap: 2px; margin-left: auto; margin-right: 107px; }
.related a { background: #f0f0f1; gap: 3px; padding: 4px 16px 0; }
.related .on { background: #40464e; color: #fff; }
.related .tall { margin-top: -4px; }
.more { background: #f0f0f1; width: 83px; height: 35px; }
.more .caret { border-width: 4px; border-bottom-width: 0; margin-left: 2px; }

/* toolbar */
.toolbar { display: flex; gap: 5px; padding: 8px 0 4px; }
.btn { height: 38px; padding: 0 12px; gap: 4px; background: #f8f9fa; border-radius: 4px; white-space: nowrap; }
.btn.icon { width: 42px; padding: 0; }
.toolbar > .btn:nth-child(3) { padding: 0 14px 0 13px; }
.toolbar > .btn.marked { box-shadow: inset 0 0 0 9px #ec1c24; background: #fff; border-radius: 16px; height: 45px; margin: -3px 0 -4px; padding: 0 16px 0 12px; }
.relation { width: 309px; }
.pager { display: flex; margin-left: auto; }
.pager button { height: 38px; border: 1px solid #dee2e6; padding: 0 12px; color: #6c757d; white-space: nowrap; }
.pager button + button { border-left: 0; }
.pager button:first-child { border-radius: 4px 0 0 4px; }
.pager .on { background: #337ab7; border-color: #337ab7; color: #fff; font-weight: 700; }
.pager .link { color: #1f6dc2; border-radius: 0 4px 4px 0; }

/* document table */
.grid { width: 100%; table-layout: fixed; border-collapse: collapse; font-size: 12px; border: 1px solid #dcdfe2; }
.c-tools { width: 155px; }
.c-title { width: 282px; }
.c-std { width: 240px; }
.c-folder { width: 328px; }
.c-link { width: 129px; }
.grid th, .grid td { text-align: left; padding: 0 12px; border-bottom: 1px solid #dcdfe2; }
.grid tbody td { padding: 1px 10px 0; height: 40px; }
.grid tbody td:first-child { padding: 0 12px; }
.head th { height: 47px; background: #f3f3f4; }
.grid .head th:not(:first-child) { padding-top: 4px; }
.filters td { height: 63px; font-size: 15px; }
.cell { display: flex; align-items: center; gap: 8px; }
.cell.tight { gap: 0; }
.cell.tight svg { margin-left: 4px; }
.sort { width: 22px; height: 22px; background: #1ba1b5; color: #fff; border-radius: 3px; }
.clear { width: 37px; padding: 0; }
.case { flex: 0 0 40px; height: 38px; border: 1px solid #495057; color: #5a6066; font: 700 17px/20px "DejaVu Serif", serif; }
.mini { width: 33px; height: 31px; background: #f8f9fa; border-radius: 3px; }
tbody .cell { gap: 9px; }
tbody .cell .mini { margin-left: 5px; }
tbody .cell .mini + .mini { margin-left: -5px; }

/* footer */
.footer {
  height: 30px;
  overflow: hidden;
  display: flex;
  justify-content: space-between;
  align-items: flex-start;
  background: #363a41;
  color: #fff;
  padding: 0 7px;
  font-size: 10px;
  line-height: 16px;
  text-align: center;
}
.social, .help { display: flex; gap: 6px; width: 240px; padding-top: 4px; }
.help { justify-content: flex-end; gap: 12px; }
```
